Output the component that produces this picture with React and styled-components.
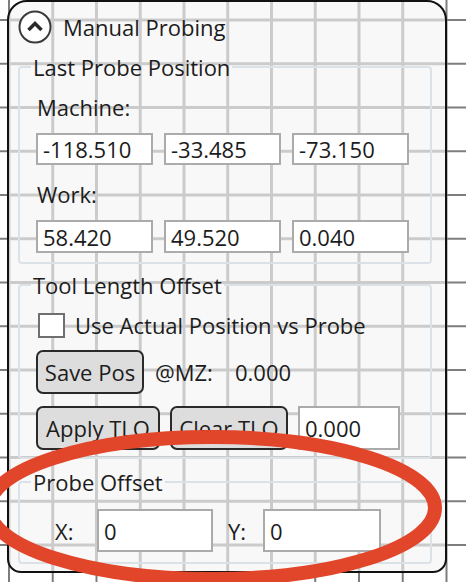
import React from "react";
import styled, { createGlobalStyle } from "styled-components";

const GlobalStyle = createGlobalStyle`
  html, body {
    margin: 0;
    padding: 0;
  }
  body {
    width: 466px;
    height: 582px;
    overflow: hidden;
    background-color: #ffffff;
    background-image:
      linear-gradient(to right, #7d7d7d 2px, transparent 2px),
      linear-gradient(to bottom, #7d7d7d 2px, transparent 2px);
    background-size: 43.75px 43.75px;
    background-position: 8px 19px;
    font-family: "Open Sans", "Noto Sans", sans-serif;
    color: #1c1c1c;
  }
`;

const Page = styled.div`
  position: relative;
  width: 466px;
  height: 582px;
  padding-left: 7px;
  box-sizing: border-box;
`;

const Panel = styled.div`
  width: 440px;
  height: 573px;
  box-sizing: border-box;
  border: 2px solid #111;
  border-radius: 20px 20px 14px 14px;
  padding: 0 13px 0 9px;
  background-color: #f8f8f8;
  background-image:
    linear-gradient(to right, #cbcbcb 3px, transparent 3px),
    linear-gradient(to bottom, #cbcbcb 3px, transparent 3px);
  background-size: 43.75px 43.75px;
  background-position: 7.5px 18.5px;
  background-attachment: fixed;
`;

const Header = styled.div`
  display: flex;
  align-items: center;
  gap: 11px;
  height: 50px;
`;

const HeaderTitle = styled.span`
  font-size: 22px;
  line-height: 28px;
`;

const Group = styled.fieldset`
  margin: ${({ top }) => top}px 0 0 0;
  padding: 0 0 ${({ bottom }) => bottom}px 0;
  border: 2px solid #dbe2e7;
  border-radius: 4px;
  min-inline-size: 0;
`;

const Legend = styled.legend`
  margin-left: 11px;
  padding: 0 2px;
  font-size: 22px;
  line-height: 28px;
`;

const GroupBody = styled.div`
  padding-left: ${({ left }) => left}px;
`;

const Label = styled.div`
  font-size: 22px;
  line-height: 28px;
  margin-top: ${({ top }) => top}px;
  padding-left: 1px;
`;

const FieldRow = styled.div`
  display: grid;
  grid-template-columns: 117px 117px 117px;
  column-gap: 11px;
  margin-top: ${({ top }) => top}px;
`;

const Field = styled.div`
  box-sizing: border-box;
  width: ${({ w }) => (w ? `${w}px` : "auto")};
  height: ${({ h }) => h}px;
  background: #fff;
  border: 2px solid #ababab;
  padding-left: 5px;
  font-size: 22px;
  display: flex;
  align-items: center;
`;

const Row = styled.div`
  display: flex;
  align-items: center;
  gap: ${({ gap }) => gap}px;
  margin-top: ${({ top }) => top}px;
`;

const Check = styled.div`
  box-sizing: border-box;
  width: 27px;
  height: 25px;
  margin-left: 2px;
  background: #fff;
  border: 2px solid #6f6f6f;
`;

const Text = styled.span`
  box-sizing: border-box;
  font-size: 22px;
  line-height: 28px;
  width: ${({ w }) => (w ? `${w}px` : "auto")};
  padding-left: ${({ pl }) => pl || 0}px;
`;

const Button = styled.div`
  box-sizing: border-box;
  width: ${({ w }) => w}px;
  height: 44px;
  border: 2px solid #2a2a2a;
  border-radius: 7px;
  background: #dddddd;
  font-size: 22px;
  display: flex;
  align-items: center;
  justify-content: center;
`;

const Annotation = styled.svg`
  position: absolute;
  left: 0;
  top: 0;
  pointer-events: none;
`;

const CollapseIcon = () => (
  <svg width="34" height="34" viewBox="0 0 34 34">
    <circle cx="17" cy="17" r="15.5" fill="#fff" stroke="#3a3a3a" strokeWidth="2" />
    <path d="M10.5 20 L17 13.5 L23.5 20" fill="none" stroke="#2a2a2a" strokeWidth="3.5" />
  </svg>
);

export default function App() {
  return (
    <Page>
      <GlobalStyle />
      <Panel>
        <Header>
          <CollapseIcon />
          <HeaderTitle>Manual Probing</HeaderTitle>
        </Header>

        <Group top={1} bottom={9}>
          <Legend>Last Probe Position</Legend>
          <GroupBody left={16}>
            <Label top={12}>Machine:</Label>
            <FieldRow top={12}>
              <Field h={32}>-118.510</Field>
              <Field h={32}>-33.485</Field>
              <Field h={32}>-73.150</Field>
            </FieldRow>
            <Label top={15}>Work:</Label>
            <FieldRow top={12}>
              <Field h={33}>58.420</Field>
              <Field h={33}>49.520</Field>
              <Field h={33}>0.040</Field>
            </FieldRow>
          </GroupBody>
        </Group>

        <Group top={7} bottom={7}>
          <Legend>Tool Length Offset</Legend>
          <GroupBody left={16}>
            <Row top={12} gap={10}>
              <Check />
              <Text>Use Actual Position vs Probe</Text>
            </Row>
            <Row top={11} gap={11}>
              <Button w={108}>Save Pos</Button>
              <Text w={69}>@MZ:</Text>
              <Text>0.000</Text>
            </Row>
            <Row top={12} gap={10}>
              <Button w={124}>Apply TLO</Button>
              <Button w={118}>Clear TLO</Button>
              <Field h={44} w={102}>0.000</Field>
            </Row>
          </GroupBody>
        </Group>

        <Group top={9} bottom={10}>
          <Legend>Probe Offset</Legend>
          <GroupBody left={35}>
            <Row top={13} gap={0}>
              <Text w={42}>X:</Text>
              <Field h={43} w={116}>0</Field>
              <Text w={50} pl={15}>Y:</Text>
              <Field h={43} w={118}>0</Field>
            </Row>
          </GroupBody>
        </Group>
      </Panel>

      <Annotation width="466" height="582" viewBox="0 0 466 582">
        <ellipse cx="212" cy="508" rx="223" ry="71" fill="none" stroke="#e2462a" strokeWidth="14" />
      </Annotation>
    </Page>
  );
}
